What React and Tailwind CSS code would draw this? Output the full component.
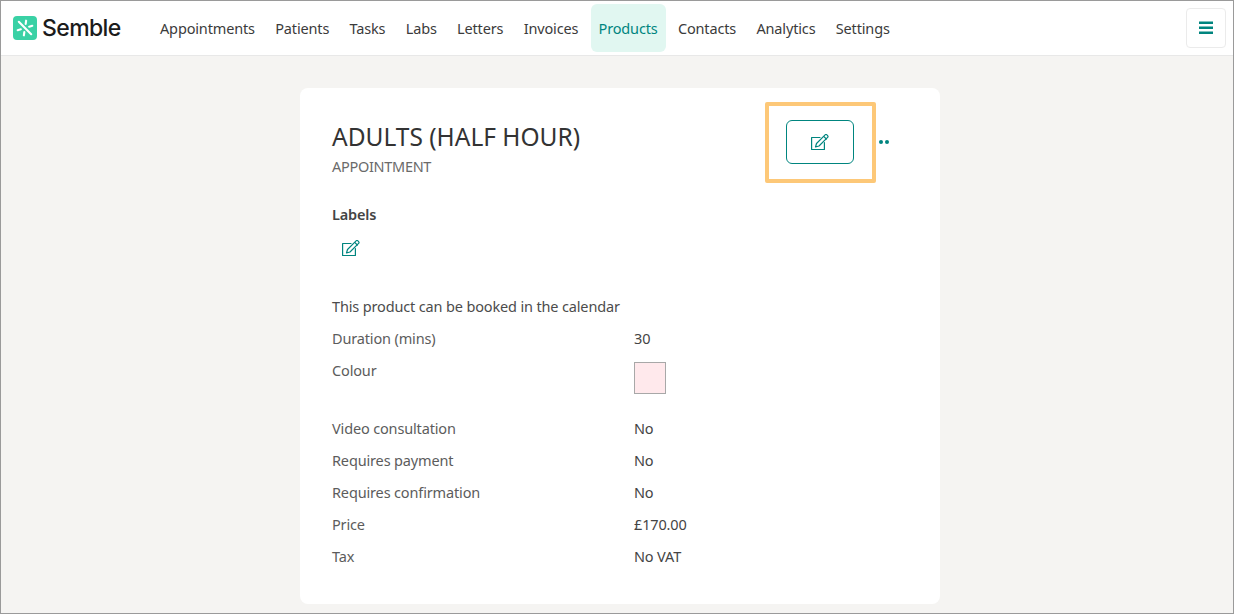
const navItems = ['Appointments', 'Patients', 'Tasks', 'Labs', 'Letters', 'Invoices', 'Products', 'Contacts', 'Analytics', 'Settings']

const details = [
  { label: 'Video consultation', value: 'No' },
  { label: 'Requires payment', value: 'No' },
  { label: 'Requires confirmation', value: 'No' },
  { label: 'Price', value: '£170.00' },
  { label: 'Tax', value: 'No VAT' },
]

function EditIcon({ className }) {
  return (
    <svg className={className} viewBox="0 0 18 16" fill="none" stroke="currentColor" strokeWidth="1.2" strokeLinejoin="round" strokeLinecap="round">
      <path d="M9 3.5H.6v12h12.8V8.5" />
      <path d="M5.5 9.5l-1 3.5 3.5-1 8.6-8.6a1.3 1.3 0 0 0 0-1.8l-.7-.7a1.3 1.3 0 0 0-1.8 0z" />
      <path d="M13 2.7l2.3 2.3" />
    </svg>
  )
}

function Row({ label, children }) {
  return (
    <div className="flex h-8 items-start">
      <div className="w-[302px] text-[#5c5c5c]">{label}</div>
      <div className="text-[#444]">{children}</div>
    </div>
  )
}

export default function App() {
  return (
    <div className="flex h-[614px] flex-col overflow-hidden border border-[#9a9a9a] bg-[#f5f4f2] text-[14.5px] leading-6 tracking-[-0.15px] font-['Noto_Sans',sans-serif]">
      {/* Header */}
      <header className="flex h-[55px] shrink-0 items-center border-b border-[#e8e8e8] bg-white pr-[7px] pl-3">
        <div className="flex w-[139px] items-center gap-[5px]">
          <div className="flex h-6 w-6 items-center justify-center rounded-[4px] bg-[#3ad1a5]">
            <svg className="h-[18px] w-[18px]" viewBox="0 0 16 16" fill="none" stroke="white" strokeWidth="1.9" strokeLinecap="round">
              <path d="M2.5 2.5l11 11M9 1.5l-.4 2.8M7 14.5l.4-2.8M14.5 6l-2.8.9M1.5 10l2.8-.9" />
            </svg>
          </div>
          <span className="text-[23px] leading-none font-medium tracking-[-0.6px] text-[#1b1b1b] font-['Inter',sans-serif]">Semble</span>
        </div>
        <nav className="flex flex-1 items-center gap-[4.3px]">
          {navItems.map((item) => (
            <a key={item} className={`flex h-12 items-center rounded-md px-2 ${item === 'Products' ? 'bg-[#e1f7f1] text-[#00857f]' : 'text-[#3b3b3b]'}`}>
              {item}
            </a>
          ))}
        </nav>
        <button className="flex h-10 w-10 items-center justify-center rounded-[4px] border border-[#ebebeb] bg-white">
          <svg className="h-4 w-4" viewBox="0 0 16 16" fill="#00857f">
            <rect x="1" y="1.5" width="14" height="2.5" />
            <rect x="1" y="6.5" width="14" height="2.5" />
            <rect x="1" y="11.5" width="14" height="2.5" />
          </svg>
        </button>
      </header>

      {/* Card */}
      <main className="flex flex-1 justify-center pt-8 pl-[6px]">
        <section className="relative h-[516px] w-[640px] rounded-lg bg-white px-8 pt-8">
          <div className="flex items-start justify-between pr-[54px]">
            <div>
              <h1 className="text-[24.5px] leading-[34px] tracking-normal text-[#333]">ADULTS (HALF HOUR)</h1>
              <p className="tracking-[-0.3px] text-[#6a6a6a]">APPOINTMENT</p>
            </div>
            <div className="flex items-center">
              <button className="flex h-11 w-[68px] items-center justify-center rounded-md border border-[#00857f] text-[#00857f]">
                <EditIcon className="h-4 w-[18px]" />
              </button>
            </div>
          </div>

          {/* Highlight around the edit button */}
          <div className="absolute top-[14px] left-[465px] h-[81px] w-[111px] rounded-[2px] border-4 border-[#fdc878]" />
          <div className="absolute top-[52px] left-[579px] flex gap-[2px]">
            <span className="h-1 w-1 rounded-full bg-[#00857f]" />
            <span className="h-1 w-1 rounded-full bg-[#00857f]" />
          </div>

          <div className="mt-6 font-semibold text-[#444]">Labels</div>
          <div className="mt-[14px] pl-[10px] text-[#00857f]">
            <EditIcon className="h-4 w-[18px]" />
          </div>

          <div className="mt-[38px] h-8 text-[#4c4c4c]">This product can be booked in the calendar</div>
          <Row label="Duration (mins)">30</Row>
          <div className="flex h-[58px] items-start">
            <div className="w-[302px] text-[#5c5c5c]">Colour</div>
            <div className="mt-1 h-8 w-8 border border-[#a8a8a8] bg-[#ffe9ec]" />
          </div>
          {details.map((d) => (
            <Row key={d.label} label={d.label}>{d.value}</Row>
          ))}
        </section>
      </main>
    </div>
  )
}
